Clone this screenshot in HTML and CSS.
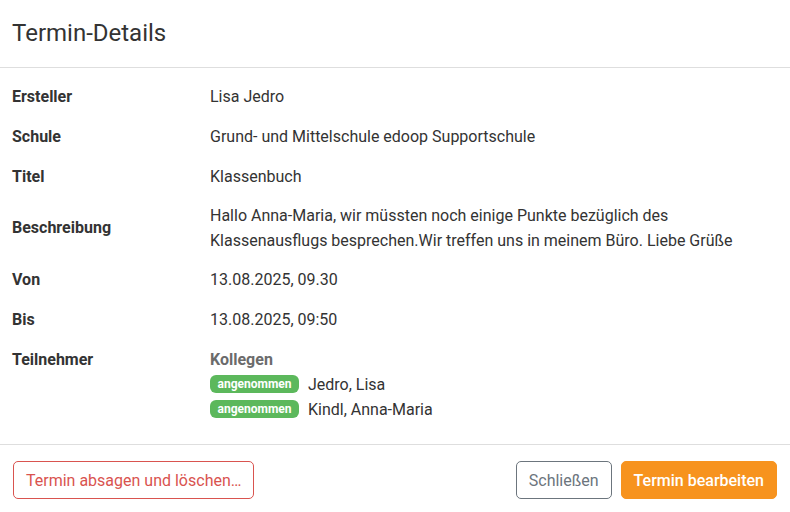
FILE: index.html
```html
<!DOCTYPE html>
<html lang="de">
<head>
<meta charset="utf-8">
<title>Termin-Details</title>
<link rel="stylesheet" href="styles.css">
</head>
<body>
<div class="modal">
  <div class="modal-header">
    <h4 class="modal-title">Termin-Details</h4>
  </div>
  <div class="modal-body">
    <div class="row">
      <div class="label">Ersteller</div>
      <div class="value">Lisa Jedro</div>
    </div>
    <div class="row">
      <div class="label">Schule</div>
      <div class="value">Grund- und Mittelschule edoop Supportschule</div>
    </div>
    <div class="row">
      <div class="label">Titel</div>
      <div class="value">Klassenbuch</div>
    </div>
    <div class="row row-multi">
      <div class="label">Beschreibung</div>
      <div class="value">Hallo Anna-Maria, wir müssten noch einige Punkte bezüglich des Klassenausflugs besprechen.Wir treffen uns in meinem Büro. Liebe Grüße</div>
    </div>
    <div class="row">
      <div class="label">Von</div>
      <div class="value">13.08.2025, 09.30</div>
    </div>
    <div class="row">
      <div class="label">Bis</div>
      <div class="value">13.08.2025, 09:50</div>
    </div>
    <div class="row row-top">
      <div class="label">Teilnehmer</div>
      <div class="value">
        <div class="group">Kollegen</div>
        <div class="participant"><span class="badge">angenommen</span>Jedro, Lisa</div>
        <div class="participant"><span class="badge">angenommen</span>Kindl, Anna-Maria</div>
      </div>
    </div>
  </div>
  <div class="modal-footer">
    <button class="btn btn-danger-outline">Termin absagen und löschen…</button>
    <div class="spacer"></div>
    <button class="btn btn-secondary-outline">Schließen</button>
    <button class="btn btn-orange">Termin bearbeiten</button>
  </div>
</div>
</body>
</html>
```
FILE: styles.css
```css
* { box-sizing: border-box; }
html, body { margin: 0; padding: 0; background: #fff; }
body {
  font-family: Roboto, "Liberation Sans", sans-serif;
  font-size: 16px;
  color: #333;
}
.modal { width: 790px; }
.modal-header {
  padding: 18px 12px 0 12px;
  height: 68px;
  border-bottom: 1px solid #dedede;
}
.modal-title {
  margin: 0;
  font-size: 24px;
  font-weight: 400;
  line-height: 30px;
  color: #333;
}
.modal-body {
  padding: 8px 12px 15px 12px;
}
.row {
  display: grid;
  grid-template-columns: 198px 1fr;
  align-items: center;
  padding: 7.5px 0;
  line-height: 25px;
}
.row-multi { padding: 6.5px 0; }
.row-top { align-items: start; }
.label { font-weight: 700; color: #333; }
.group { font-weight: 700; color: #6b6b6b; }
.participant { display: flex; align-items: center; }
.badge {
  display: inline-block;
  background: #5cb85c;
  color: #fff;
  font-size: 12px;
  font-weight: 700;
  line-height: 18px;
  padding: 0 7.5px;
  border-radius: 6px;
  margin-right: 9px;
}
.modal-footer {
  border-top: 1px solid #dedede;
  display: flex;
  align-items: center;
  gap: 9px;
  padding: 16px 13px;
}
.spacer { flex: 1; }
.btn {
  font-family: Roboto, "Liberation Sans", sans-serif;
  font-size: 16px;
  height: 38px;
  padding: 0 12px;
  border-radius: 5px;
  background: #fff;
  cursor: pointer;
}
.btn-danger-outline { border: 1px solid #d9534f; color: #d9534f; }
.btn-secondary-outline { border: 1px solid #6c757d; color: #6c757d; }
.btn-orange { border: 1px solid #f7931e; background: #f7931e; color: #fff; font-weight: 500; }
```
